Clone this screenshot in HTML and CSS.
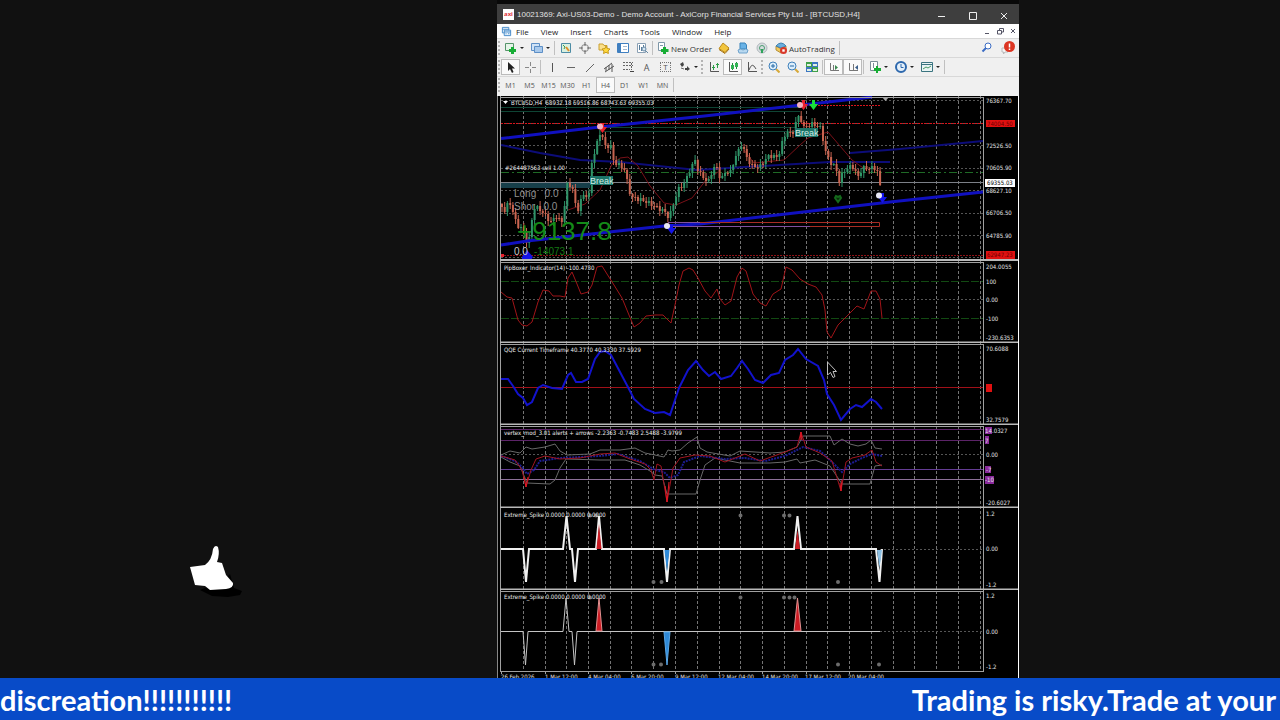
FILE: index.html
```
<!DOCTYPE html>
<html lang="en">
<head>
    <meta charset="UTF-8">
    <meta name="viewport" content="width=device-width, initial-scale=1.0">
    <title>BTCUSD,H4</title>
    <link rel="stylesheet" href="styles.css">
</head>
<body>
  <div class="stream">
    <main class="stage">
      <div class="like">
        <svg class="like-icon" viewBox="0 0 56 56" role="img" aria-label="Like">
          <path class="like-shadow" d="M12 48L36 38L42 32L46 46L54 49L52 53L40 55L24 54Z"/>
          <path class="like-hand" d="M2 25L17 23Q24 18 25 7Q27 2 30 5Q32 12 29 20L34 21L38 33L45 41Q46 46 38 47L22 48L17 44L7 43Z"/>
        </svg>
      </div>

      <section class="terminal">
        <header class="title-bar">
          <span class="app-logo">axi</span>
          <h1 class="title">10021369: Axi-US03-Demo - Demo Account - AxiCorp Financial Services Pty Ltd - [BTCUSD,H4]</h1>
          <div class="window-buttons">
            <button aria-label="Minimize"><svg viewBox="0 0 10 10"><path d="M1 5.5H8"/></svg></button>
            <button aria-label="Maximize"><svg viewBox="0 0 10 10"><path d="M1.5 1.5H8.5V8.5H1.5Z"/></svg></button>
            <button aria-label="Close"><svg viewBox="0 0 10 10"><path d="M2 2L8 8M8 2L2 8"/></svg></button>
          </div>
        </header>

        <nav class="menu-bar">
          <svg class="menu-icon" viewBox="0 0 12 12"><path fill="#fff" stroke="#3f86c6" d="M1.500 1.500H8.500V7.500H1.500ZM1.500 3.500H8.500"/><path fill="#e4f1fb" stroke="#3f86c6" d="M3.500 4.500H10.500V10.500H3.500ZM3.500 6.500H10.500M5.500 9V8M8.500 9V7.500"/></svg>
          <a href="#">File</a>
          <a href="#">View</a>
          <a href="#">Insert</a>
          <a href="#">Charts</a>
          <a href="#">Tools</a>
          <a href="#">Window</a>
          <a href="#">Help</a>
          <div class="child-buttons">
            <button aria-label="Minimize chart"><svg viewBox="0 0 8 8"><path d="M2 6.500H6"/></svg></button>
            <button aria-label="Restore chart"><svg viewBox="0 0 8 8"><path d="M1.500 3.500H5.500V7H1.500ZM3.500 3V1.500H7.500V5H6"/></svg></button>
            <button aria-label="Close chart"><svg viewBox="0 0 8 8"><path d="M2 2L6 6M6 2L2 6"/></svg></button>
          </div>
        </nav>

        <div class="toolbar">
          <i class="grip"></i>
          <button class="tool drop" aria-label="New chart"><svg viewBox="0 0 12 12"><path fill="#e5f4e8" stroke="#55946a" d="M.5 1.500H8.500V8.500H.5Z"/><path fill="#17ad35" d="M6 5H9V7H11V10H9V12H6V10H4V7H6Z"/></svg></button>
          <button class="tool drop" aria-label="Profiles"><svg viewBox="0 0 12 12"><path fill="#cfe2f6" stroke="#5d8fc6" d="M.5 1.500H8.500V8.500H.5Z"/><path fill="#a8c9ec" stroke="#5d8fc6" d="M3.500 4.500H11.500V10.500H3.500Z"/></svg></button>
          <i class="sep"></i>
          <button class="tool" aria-label="Market Watch"><svg viewBox="0 0 12 12"><path fill="#d9f0df" stroke="#4d8ca5" d="M1.500 1.500H10.500V10.500H1.500Z"/><path stroke="#3f9a4c" d="M3 3L5 5L4 7"/><path stroke="#e0902c" stroke-width="2" d="M6 5L9 9"/></svg></button>
          <button class="tool" aria-label="Data Window"><svg viewBox="0 0 12 12"><circle cx="6" cy="6" r="3.500" stroke="#888"/><path stroke="#666" d="M6 0V4M6 8V12M0 6H4M8 6H12"/></svg></button>
          <button class="tool" aria-label="Navigator"><svg viewBox="0 0 12 12"><path fill="#fbe08a" stroke="#caa032" d="M1 2H5L6 3.500H9V8H1Z"/><path fill="#ffd93b" stroke="#c79a1e" d="M8 4L9.200 6.500L12 7L10 9L10.400 11.500L8 10.300L5.500 11.500L6 9L4 7L7 6.500Z"/></svg></button>
          <button class="tool" aria-label="Terminal"><svg viewBox="0 0 12 12"><path fill="#fff" stroke="#3f7fc0" d="M.5 1.500H11.500V10.500H.5Z"/><path fill="#3f7fc0" d="M1 2H4V10H1Z"/><path stroke="#a0b8d0" d="M6 4.500H10M6 7.500H10"/></svg></button>
          <button class="tool" aria-label="Strategy Tester"><svg viewBox="0 0 12 12"><path fill="#fff" stroke="#8aa0b4" d="M1.500 1.500H9.500V10.500H1.500Z"/><path stroke="#577d9c" d="M3.500 3V8M5.500 5V9M7.500 3V6"/><circle cx="8" cy="7" r="2" fill="#d8e8f4" stroke="#6789a5"/><path stroke="#6789a5" d="M9.500 8.500L12 11"/></svg></button>
          <i class="sep"></i>
          <button class="tool wide"><svg viewBox="0 0 12 12"><path fill="#fff" stroke="#7e97a8" d="M1.500 .5H7.500V8.500H1.500ZM3 3.500H6"/><path fill="#17ad35" d="M6 5H9V7H11.500V10H9V12H6V10H4V7H6Z"/></svg>New Order</button>
          <button class="tool" aria-label="MetaEditor"><svg viewBox="0 0 12 12"><path fill="#f2c53d" stroke="#bd8a1c" d="M5 1L11 6L7 10.500L1 6.500Z"/><path stroke="#a87410" d="M1 7.500L7 11.500L11 7"/></svg></button>
          <button class="tool" aria-label="Community"><svg viewBox="0 0 12 12"><path fill="#69b2e6" stroke="#3883ba" d="M3 1H8L9.500 3V7H3Z"/><path fill="#b8d8ef" stroke="#6fa3cc" d="M1 8Q4 6 6 8Q9 6 11 8L10 11H2Z"/></svg></button>
          <button class="tool" aria-label="Signals"><svg viewBox="0 0 12 12"><circle cx="6" cy="6" r="5" fill="#d8dde0" stroke="#b0b8bc"/><circle cx="6" cy="6" r="2.500" stroke="#4a9c70"/><path stroke="#2fa35a" stroke-width="2" d="M6 7V11"/></svg></button>
          <button class="tool wide"><svg viewBox="0 0 12 12"><path fill="#f0c75c" stroke="#b5913a" d="M1 4L6 7L11 4V8L6 11L1 8Z"/><path fill="#69aede" stroke="#3d7fae" d="M1 4Q6 -2 11 4L6 6Z"/><circle cx="8.500" cy="8.500" r="3.500" fill="#d8382a"/><path fill="#fff" d="M7.300 7.300H9.700V9.700H7.300Z"/></svg>AutoTrading</button>
          <i class="sep"></i>
          <div class="toolbar-end">
            <button class="tool" aria-label="Search"><svg viewBox="0 0 12 12"><circle cx="7" cy="4" r="3" fill="#fff" stroke="#3b6cc4"/><path stroke="#3b6cc4" stroke-width="2" d="M5 6L1.500 9.500"/></svg></button>
            <button class="tool" aria-label="Alerts"><svg viewBox="0 0 14 14"><path fill="#f5f5f5" stroke="#bbb" d="M1 7H7V11H4L2.500 13V11H1Z"/><circle cx="8.500" cy="5.500" r="5.500" fill="#dc3522"/><path stroke="#fff" stroke-width="1.500" d="M8.500 2.500V6.500M8.500 7.500V9"/></svg></button>
          </div>
        </div>

        <div class="toolbar">
          <i class="grip"></i>
          <button class="tool pressed" aria-label="Cursor"><svg viewBox="0 0 12 12"><path fill="#222" d="M3 1V10L5 8L7 12L8.500 11L7 7.500H10Z"/></svg></button>
          <button class="tool" aria-label="Crosshair"><svg viewBox="0 0 12 12"><path stroke="#888" d="M6.500 1V5M6.500 8V12M1 6.500H5M8 6.500H12"/></svg></button>
          <i class="sep"></i>
          <button class="tool" aria-label="Vertical line"><svg viewBox="0 0 12 12"><path stroke="#555" d="M6.500 2V11"/></svg></button>
          <button class="tool" aria-label="Horizontal line"><svg viewBox="0 0 12 12"><path stroke="#666" d="M2 6.500H10"/></svg></button>
          <button class="tool" aria-label="Trendline"><svg viewBox="0 0 12 12"><path stroke="#666" d="M2 11L10 3"/></svg></button>
          <button class="tool" aria-label="Channel"><svg viewBox="0 0 12 12"><path stroke="#555" d="M1 8L9 2M2 11L11 5M3 6V10M6 4V9M9 3V11"/></svg></button>
          <button class="tool" aria-label="Fibonacci"><svg viewBox="0 0 12 12"><path stroke="#666" stroke-dasharray="2 1" d="M1 1.500H11M1 4.500H11M1 8.500H8M9.500 2V9"/><path stroke="#444" d="M8 10.500H12"/></svg></button>
          <button class="tool text-tool" aria-label="Text">A</button>
          <button class="tool text-tool" aria-label="Text label"><span class="dotted">T</span></button>
          <button class="tool drop" aria-label="Arrows"><svg viewBox="0 0 12 12"><path fill="#444" d="M1 3L4 1L5 4L3 6ZM6 7H8V5L11 8L8 10V9H6Z"/><path stroke="#666" d="M2 7L5 8"/></svg></button>
          <i class="grip"></i>
          <button class="tool" aria-label="Bar chart"><svg viewBox="0 0 12 12"><path stroke="#555" d="M2.500 1V10.500H11"/><path stroke="#2c9d46" d="M5.500 4V9M9.500 2V7M8 3.500H11M4 6.500H7"/></svg></button>
          <button class="tool pressed" aria-label="Candlesticks"><svg viewBox="0 0 12 12"><path stroke="#555" d="M2.500 1V10.500H11"/><path stroke="#1c8d38" d="M5.500 2V9M9.500 1V8"/><path fill="#2fb151" d="M4 4H7V8H4ZM8 2H11V6H8Z"/></svg></button>
          <button class="tool" aria-label="Line chart"><svg viewBox="0 0 12 12"><path stroke="#555" d="M2.500 1V10.500H11M3 9Q6 0 10 8"/></svg></button>
          <i class="grip"></i>
          <button class="tool" aria-label="Zoom in"><svg viewBox="0 0 12 12"><path stroke="#d6a93a" stroke-width="2" d="M8 8L11.500 11.500"/><circle cx="5" cy="5" r="4" fill="#dceefb" stroke="#3f80ba"/><path stroke="#2468a5" d="M5 3V7M3 5H7"/></svg></button>
          <button class="tool" aria-label="Zoom out"><svg viewBox="0 0 12 12"><path stroke="#d6a93a" stroke-width="2" d="M8 8L11.500 11.500"/><circle cx="5" cy="5" r="4" fill="#dceefb" stroke="#3f80ba"/><path stroke="#2468a5" d="M3 5H7"/></svg></button>
          <button class="tool" aria-label="Tile windows"><svg viewBox="0 0 12 12"><path fill="#3fa04a" d="M0 1H6V6H0ZM6 6H12V11H6Z"/><path fill="#3c76c2" d="M6 1H12V6H6ZM0 6H6V11H0Z"/><path fill="#e2f1e2" d="M1 3H5V5H1ZM7 3H11V5H7ZM1 8H5V10H1ZM7 8H11V10H7Z"/></svg></button>
          <i class="sep"></i>
          <button class="tool pressed" aria-label="Auto scroll"><svg viewBox="0 0 12 12"><path stroke="#777" d="M2.500 2V9.500H11M5.500 4V9"/><path fill="#3c8a50" d="M7 4L10 6.500L7 9Z"/></svg></button>
          <button class="tool pressed" aria-label="Chart shift"><svg viewBox="0 0 12 12"><path stroke="#777" d="M2.500 2V9.500H11M6.500 3V9"/><path fill="#3b5f8a" d="M11 4L8 6.500L11 9Z"/></svg></button>
          <i class="sep"></i>
          <button class="tool drop" aria-label="Indicators"><svg viewBox="0 0 12 12"><path fill="#fff" stroke="#7c8d98" d="M1.500 .5H8.500V9.500H1.500ZM4.500 2V7"/><path fill="#17ad35" d="M7 5H9V7H12V10H9V12H7V10H5V7H7Z"/></svg></button>
          <button class="tool drop" aria-label="Periods"><svg viewBox="0 0 12 12"><circle cx="6" cy="6" r="5" fill="#e5f0fa" stroke="#2d68ad" stroke-width="2"/><path stroke="#2d68ad" d="M6 3V6.500H8.500"/></svg></button>
          <button class="tool drop" aria-label="Templates"><svg viewBox="0 0 12 12"><path fill="#eaf4f4" stroke="#3b7480" d="M.5 1.500H11.500V10.500H.5ZM.5 3.500H11.500"/><path stroke="#4a9b67" d="M2 8L5 6L7 7L10 5"/></svg></button>
          <i class="sep"></i>
        </div>

        <div class="toolbar periods">
          <i class="grip"></i>
          <button class="tool">M1</button>
          <button class="tool">M5</button>
          <button class="tool">M15</button>
          <button class="tool">M30</button>
          <button class="tool">H1</button>
          <button class="tool pressed">H4</button>
          <button class="tool">D1</button>
          <button class="tool">W1</button>
          <button class="tool">MN</button>
          <i class="sep"></i>
        </div>

        <div class="charts">
          <!-- price -->
          <svg class="panel" viewBox="498 96 520 165">
            <defs>
              <path id="grid" d="M523.5 96V680M545.5 96V680M566.5 96V680M588.5 96V680M610.5 96V680M631.5 96V680M653.5 96V680M675.5 96V680M697.5 96V680M719.5 96V680M740.5 96V680M762.5 96V680M784.5 96V680M806.5 96V680M827.5 96V680M849.5 96V680M871.5 96V680M893.5 96V680M914.5 96V680M936.5 96V680M958.5 96V680M980.5 96V680"/>
              <path id="arrow" d="M-1 -4H2V0H5L0.500 6L-4 0H-1Z"/>
            </defs>
            <use href="#grid" class="grid"/>
            <path class="grid grid-h" d="M501 100.500H983M501 123.500H983M501 145.500H983M501 168.500H983M501 190.500H983M501 213.500H983M501 235.500H983M501 257.500H983"/>
            <path class="zone" d="M501 183H590V188H501Z"/>
            <path class="level-green" d="M501 107.500H800M501 111.500H800M604 127.500H796M604 131.500H796"/>
            <path class="order-line" d="M501 172.500H983"/>
            <path class="price-line" d="M501 182.500H983"/>
            <path class="stop-line" d="M501 123.500H983M806 105.500H880"/>
            <path class="stop-line dim" d="M501 255.500H983"/>
            <path class="ma-navy" d="M501 145L540 153L580 160L620 162L697 170L760 166L830 162L890 162M850 153L900 149L983 141"/>
            <path class="ma-red" d="M568 210L585 204L600 190L612 164L620 158L628 157L638 166L650 186L664 203L676 205L692 198L706 180L718 172M744 150L754 163L784 160L800 145L808 138L828 132L840 146L852 160L866 170"/>
            <g id="candles"></g>
            <path class="trend" d="M501 138.500L600 127L700 116.500L872 97M501 245L527 241L664 226L700 224L890 202L983 192"/>
            <path class="range" d="M668 222.500H879.500V226.500H668Z"/>
            <path class="range-left" d="M668 222.500H700M668 226.500H810"/>
            <rect class="break" x="590" y="176" width="23" height="9"/>
            <text class="break-text" x="590" y="184">Break</text>
            <rect class="break" x="795" y="128" width="23" height="9"/>
            <text class="break-text" x="795" y="136">Break</text>
            <use href="#arrow" x="602" y="127" fill="#e8202c"/><circle class="dot-pink" cx="600" cy="126.500" r="3"/>
            <use href="#arrow" x="803" y="104" fill="#e8202c"/><circle class="dot-pink" cx="800" cy="105" r="3"/>
            <use href="#arrow" x="813" y="104" fill="#18e03c"/>
            <path fill="#0a2a0c" stroke="#146a1c" stroke-width="2" d="M838 202L835 198L836 196L838 197L840 196L841 198Z"/>
            <use href="#arrow" x="671" y="228" fill="#1414e8"/><circle class="dot-white" cx="667" cy="226" r="3"/>
            <use href="#arrow" x="882" y="197" fill="#1414e8"/><circle class="dot-white" cx="879" cy="195.500" r="3"/>
            <path fill="#1414e8" d="M527 250L533 257L531 260H522V257Z"/>
            <path fill="#e8202c" d="M501 254H504V257H501Z"/>
            <path fill="#aaa" d="M882 97H889L885.500 101Z"/>
            <path fill="#fff" d="M503 101H508L505.500 104Z"/>
            <text class="label" x="511" y="105">BTCUSD,H4  68932.18 69516.86 68743.63 69355.03</text>
            <text class="label" x="505" y="170">#264487563 sell 1.00</text>
            <text class="stat" x="514" y="197">Long&#160;&#160; 0.0</text>
            <text class="stat" x="514" y="210">Shor&#160;&#160; 0.0</text>
            <text class="profit" x="517" y="240">+9137.8</text>
            <text class="stat light" x="514" y="255">0.0</text>
            <text class="stat green" x="534" y="255">-14073.1</text>
            <path class="frame" d="M500.500 96V261M500 97.500H984M983.500 97V261"/>
            <path class="divider" d="M500 260H1018"/>
            <g class="axis">
              <text x="986" y="103">76367.70</text>
              <text x="986" y="148">72526.50</text>
              <text x="986" y="170">70605.90</text>
              <text x="986" y="193">68627.10</text>
              <text x="986" y="215">66706.50</text>
              <text x="986" y="238">64785.90</text>
              <rect class="tag-red" x="986" y="120" width="29" height="7"/><text class="tag-dark" x="987" y="126">74004.50</text>
              <rect class="tag-white" x="985" y="179" width="30" height="8"/><text class="tag-black" x="987" y="185">69355.03</text>
              <rect class="tag-red" x="986" y="251" width="29" height="8"/><text class="tag-dark" x="987" y="257">62947.23</text>
            </g>
          </svg>

          <!-- oscillator -->
          <svg class="panel" viewBox="498 261 520 82">
            <use href="#grid" class="grid"/>
            <path class="grid grid-h" d="M501 299.500H983"/>
            <path class="level-dash" d="M501 281.500H983M501 318.500H983"/>
            <path class="osc-red" d="M501 292L507 297L512 298L518 320L522 325L527 326L532 322L538 302L543 290L549 291L553 296L560 296L565 297L568 278L572 272L577 284L581 294L588 292L592 285L597 267L602 266L607 274L614 285L622 298L629 315L634 327L640 323L646 316L655 315L663 315L671 323L675 305L679 285L683 271L689 268L693 270L698 278L705 291L711 298L717 289L720 299L725 305L731 301L737 277L742 268L746 271L753 294L760 303L766 306L773 294L781 289L786 267L792 270L800 279L808 284L816 287L822 295L825 310L827 332L831 338L838 325L848 315L857 306L864 309L871 291L876 291L880 299L882 318"/>
            <text class="label" x="504" y="270">PipBoxer_Indicator(14) -100.4730</text>
            <path class="frame" d="M500.500 261V343M500 262.500H984M983.500 262V343"/>
            <path class="divider" d="M500 342.500H1018"/>
            <g class="axis">
              <text x="986" y="269">204.0055</text>
              <text x="986" y="284">100</text>
              <text x="986" y="302">0.00</text>
              <text x="986" y="321">-100</text>
              <text x="986" y="340">-230.6353</text>
            </g>
          </svg>

          <!-- qqe -->
          <svg class="panel" viewBox="498 343 520 82">
            <use href="#grid" class="grid"/>
            <path class="mid-red" d="M501 387.500H983"/>
            <path class="qqe-blue" d="M501 379L508 379L513 386L518 394L523 398L527 405L532 402L538 388L543 385L552 388L562 389L568 375L571 373L576 382L582 382L588 379L595 359L600 352L605 351L611 355L620 372L630 391L634 399L645 409L655 413L664 412L670 415L675 400L679 388L688 370L696 361L703 370L709 376L715 372L721 379L731 376L737 368L742 361L748 369L755 380L763 383L771 375L779 373L785 360L793 355L798 349L806 359L818 366L824 380L827 394L834 405L841 420L850 409L856 405L862 407L871 399L876 402L882 409"/>
            <text class="label" x="504" y="352">QQE Current Timeframe 40.3770 40.3330 37.5929</text>
            <path class="pointer" d="M827.500 362V375L830.500 372.500L833 377.500L835 376.500L833 371.500H836.500Z"/>
            <path class="frame" d="M500.500 343V425M500 344.500H984M983.500 344V425"/>
            <path class="divider" d="M500 424.500H1018"/>
            <g class="axis">
              <text x="986" y="351">70.6088</text>
              <rect class="tag-red" x="986" y="384" width="6" height="8"/>
              <text x="986" y="422">32.7579</text>
            </g>
          </svg>

          <!-- vertex -->
          <svg class="panel" viewBox="498 425 520 83">
            <use href="#grid" class="grid"/>
            <path class="grid grid-h" d="M501 454.500H983"/>
            <path class="level-purple" d="M501 429.500H983M501 440.500H983"/>
            <path class="level-violet" d="M501 469.500H983"/>
            <path class="level-pale" d="M501 479.500H983"/>
            <path class="band" d="M501 455L510 451L520 453L526 447L532 449L545 447L555 444L560 451L567 455L590 454L600 450L620 450L635 448L645 453L655 455L664 457L668 450L672 451L680 450L688 443L697 437L700 448L707 452L730 456L740 451L770 453L785 452L797 447L803 436L830 436L834 445L842 439L850 444L858 446L866 444L871 440L875 448L882 449M501 457L510 462L520 466L527 483L550 484L555 480L560 468L566 459L600 460L625 460L640 465L650 471L655 475L662 476L667 494L696 494L700 480L705 465L715 458L740 463L770 463L785 462L797 459L800 463L815 460L830 466L838 478L842 484L870 484L875 466L882 465"/>
            <path class="vertex-blue" d="M501 456L515 461L522 467L527 474L534 470L540 461L560 458L600 456L618 454L640 461L655 470L664 472L670 478L678 475L684 462L700 456L725 459L745 458L765 461L785 456L803 447L820 451L832 462L842 472L850 464L862 458L872 454L882 456"/>
            <path class="vertex-red" d="M501 456L515 460L522 470L526 487L531 470L536 459L545 456L560 459L580 458L600 454L615 453L630 459L645 464L651 470L654 480L657 464L661 466L667 502L673 468L680 458L695 455L710 456L725 462L745 454L760 461L785 452L797 447L801 432L806 447L820 453L832 461L841 491L846 462L852 458L865 455L872 450L876 462L882 466"/>
            <path class="vertex-hot" d="M524 477L526 487L528 477M665 486L667 502L669 482M840 483L841 491L842 480M800 440L801 432L802 440"/>
            <text class="label" x="504" y="435">vertex_mod_3.01 alerts + arrows -2.2363 -0.7483 2.5488 -3.9799</text>
            <path class="frame" d="M500.500 425V508M500 426.500H984M983.500 426V508"/>
            <path class="divider" d="M500 507.500H1018"/>
            <g class="axis">
              <text x="992" y="433">.0327</text>
              <rect class="tag-purple" x="985" y="427" width="7" height="7"/><text x="985" y="433">14</text>
              <rect class="tag-purple" x="985" y="436" width="4" height="8"/><text x="985" y="443">7</text>
              <text x="986" y="457">0.00</text>
              <rect class="tag-purple" x="985" y="466" width="6" height="7"/><text x="986" y="472">-7</text>
              <rect class="tag-purple" x="985" y="476" width="9" height="8"/><text x="985" y="482">-10</text>
              <text x="986" y="505">-20.6027</text>
            </g>
          </svg>

          <!-- spikes -->
          <svg class="panel" viewBox="498 508 520 82">
            <use href="#grid" class="grid"/>
            <path class="grid grid-h" d="M880 549.500H983"/>
            <path class="spike-line thick" d="M501 549H523L526 582L529 549H563L566.500 516L570 549H572L575 582L578 549H596L599 516L602 549H664L667 582L670 549H794L797.500 516L801 549H876L879.500 582L882 549"/>
            <path class="spike-red" d="M596.500 549L599 524L601.500 549ZM795 549L797.500 530L800 549Z"/>
            <path class="spike-blue" d="M664.500 550L667 572L669.500 550Z"/>
            <path class="spike-sky" d="M877 550L879.500 568L882 550Z"/>
            <path class="dots" d="M653.500 582V582M661.500 582V582M740.500 515.500V515.500M784 515.500V515.500M789.500 515.500V515.500M838 582V582M590 515.500V515.500M596 515.500V515.500"/>
            <text class="label" x="504" y="517">Extreme_Spike 0.0000 0.0000 0.0000</text>
            <path class="frame" d="M500.500 508V590M983.500 508V590"/>
            <path class="divider" d="M500 589.500H1018"/>
            <g class="axis">
              <text x="986" y="516">1.2</text>
              <text x="986" y="551">0.00</text>
              <text x="986" y="587">-1.2</text>
            </g>
          </svg>

          <svg class="panel" viewBox="498 590 520 82">
            <use href="#grid" class="grid"/>
            <path class="grid grid-h" d="M880 631.500H983"/>
            <path class="spike-line" d="M501 631.500H523L525.500 665L528 631.500H563L566 598L569 631.500H572L574.500 665L577 631.500H880"/>
            <path class="spike-red edge" d="M596 631L599 598L602 631ZM794 631L797.500 598L801 631Z"/>
            <path class="spike-blue edge" d="M664 632L667 665L670 632Z"/>
            <path class="dots" d="M653.500 664.500V664.500M661 664.500V664.500M740.500 597.500V597.500M784 597.500V597.500M789.500 597.500V597.500M794.500 597.500V597.500M838 664.500V664.500M879 664.500V664.500M590 597.500V597.500"/>
            <text class="label" x="504" y="599">Extreme_Spike 0.0000 0.0000 0.0000</text>
            <path class="frame" d="M500.500 590V672M500 591.500H984M983.500 590V672"/>
            <path class="frame" d="M500 671.500H984"/>
            <g class="axis">
              <text x="986" y="598">1.2</text>
              <text x="986" y="634">0.00</text>
              <text x="986" y="669">-1.2</text>
            </g>
          </svg>

          <svg class="panel" viewBox="498 672 520 10">
            <path class="frame" d="M501.500 672V674M545.500 672V674M588.500 672V674M631.500 672V674M675.500 672V674M719.500 672V674M762.500 672V674M806.500 672V674M849.500 672V674"/>
            <g class="axis">
              <text x="501" y="679">26 Feb 2026</text>
              <text x="545" y="679">1 Mar 12:00</text>
              <text x="588" y="679">4 Mar 04:00</text>
              <text x="631" y="679">6 Mar 20:00</text>
              <text x="675" y="679">9 Mar 12:00</text>
              <text x="718" y="679">12 Mar 04:00</text>
              <text x="762" y="679">14 Mar 20:00</text>
              <text x="805" y="679">17 Mar 12:00</text>
              <text x="848" y="679">20 Mar 04:00</text>
            </g>
          </svg>
        </div>
      </section>
    </main>

    <footer class="ticker">
      <span>discreation!!!!!!!!!!!</span>
      <span>Trading is risky.Trade at your</span>
    </footer>
  </div>
  <script src="script.js"></script>
</body>
</html>
```
FILE: styles.css
```
* {
  box-sizing: border-box;
}

body {
  margin: 0;
  background: #111;
  font-family: "Open Sans", "Noto Sans", sans-serif;
}

.stream {
  display: flex;
  flex-direction: column;
  height: 100vh;
  overflow: hidden;
}

.stage {
  flex: 1;
  min-height: 0;
  display: grid;
  grid-template-columns: 1fr 522px 261px;
  overflow: hidden;
}

/* like sticker */
.like {
  display: flex;
  align-items: flex-end;
  padding: 0 0 84px 188px;
}

.like-icon {
  width: 56px;
  height: 56px;
}

.like-hand {
  fill: #fff;
}

.like-shadow {
  fill: #000;
}

/* terminal window */
.terminal {
  grid-column: 2;
  background: #f0f0f0;
  border-top: 4px solid #080808;
}

button {
  padding: 0;
  border: 0;
  background: none;
  font: inherit;
  color: inherit;
}

.title-bar {
  display: flex;
  align-items: center;
  height: 20px;
  padding-left: 6px;
  background: #3e3e3e;
  color: #e0e0e0;
}

.app-logo {
  width: 11px;
  height: 11px;
  margin-right: 3px;
  background: #fff;
  color: #e0303c;
  font-size: 6px;
  font-weight: 700;
  line-height: 10px;
  text-align: center;
}

.title {
  flex: 1;
  margin: 0;
  font-family: "Liberation Sans", sans-serif;
  font-size: 8px;
  font-weight: 400;
  white-space: nowrap;
}

.window-buttons {
  display: flex;
}

.window-buttons button {
  width: 31px;
  height: 20px;
}

.window-buttons svg {
  width: 10px;
  height: 10px;
  fill: none;
  stroke: #eee;
}

.menu-bar {
  display: flex;
  align-items: center;
  gap: 12px;
  height: 14px;
  padding-left: 4px;
  background: #fff;
  font-size: 8px;
}

.menu-bar a {
  color: #222;
  text-decoration: none;
}

.menu-icon {
  width: 11px;
  height: 11px;
  margin-right: -8px;
}

.child-buttons {
  display: flex;
  margin-left: auto;
}

.child-buttons button {
  display: flex;
  align-items: center;
  justify-content: center;
  width: 13px;
}

.child-buttons svg {
  width: 8px;
  height: 8px;
  fill: none;
  stroke: #556;
}

/* toolbars */
.toolbar {
  display: flex;
  align-items: center;
  height: 19px;
  padding-left: 1px;
  border-top: 1px solid #d8d8d8;
  color: #333;
  font-size: 8px;
}

.tool {
  display: flex;
  align-items: center;
  justify-content: center;
  width: 19px;
  height: 16px;
}

.tool svg {
  flex: none;
  width: 12px;
  height: 12px;
  fill: none;
}

.drop {
  width: 26px;
}

.drop::after {
  content: "";
  margin-left: 3px;
  border: 2px solid transparent;
  border-top-color: #222;
  border-bottom: 0;
}

.wide {
  width: auto;
  gap: 2px;
  padding: 0 3px;
  white-space: nowrap;
}

.pressed {
  border: 1px solid #bbb;
  background: #fafafa;
}

.text-tool {
  font-size: 9px;
  color: #555;
}

.dotted {
  border: 1px dotted #777;
  padding: 0 2px;
  font-size: 8px;
  line-height: 8px;
}

.grip {
  width: 3px;
  height: 14px;
  border-left: 2px dotted #b4b4b4;
}

.sep {
  width: 1px;
  height: 14px;
  margin: 0 1px;
  background: #c0c0c0;
}

.toolbar-end {
  display: flex;
  gap: 2px;
  margin-left: auto;
  padding-right: 2px;
}

.toolbar-end .tool:last-child svg {
  width: 14px;
  height: 14px;
}

.periods {
  height: 17px;
  color: #555;
  font-size: 7px;
}

/* charts */
.charts {
  margin-top: 3px;
  padding: 0 1px;
  background: #000;
  box-shadow: inset 1px 0 #888, inset -1px 0 #fff;
}

.panel {
  display: block;
  width: 100%;
  fill: none;
}

.panel text {
  font-family: "DejaVu Sans Condensed", "DejaVu Sans", sans-serif;
  white-space: pre;
}

.grid {
  stroke: #747474;
  stroke-dasharray: 3 2;
}

.grid-h {
  stroke: #555;
  stroke-dasharray: 2 2;
}

.frame {
  stroke: #a0a0a0;
}

.divider {
  stroke: #b8b8b8;
  stroke-width: 2;
}

.zone {
  fill: #173f4a;
}

.level-green {
  stroke: #0e4434;
}

.order-line {
  stroke: #1f6a26;
  stroke-dasharray: 8 3 2 3;
}

.price-line {
  stroke: #7c8088;
}

.stop-line {
  stroke: #d8141c;
  stroke-dasharray: 2 1;
}

.stop-line.dim {
  stroke: #8c1014;
}

.ma-navy {
  stroke: #0c0c78;
  stroke-width: 2;
}

.ma-red {
  stroke: #7a1018;
}

.trend {
  stroke: #1010c0;
  stroke-width: 3;
}

.range {
  stroke: #a82c24;
}

.range-left {
  stroke: #8050a0;
}

.break {
  fill: #1c7468;
}

.panel .break-text {
  fill: #d0ece6;
  font-family: "Liberation Sans", sans-serif;
  font-size: 9px;
}

.dot-pink {
  fill: #f0b0c0;
}

.dot-white {
  fill: #e8e8f4;
}

.up {
  stroke: #2f9468;
}

.down {
  stroke: #c86450;
}

.body {
  stroke-width: 2;
}

.label {
  fill: #ececec;
  font-size: 6px;
}

.panel .stat {
  fill: #909090;
  font-family: "Liberation Sans", sans-serif;
  font-size: 10px;
}

.panel .light {
  fill: #c8c8c8;
}

.panel .green {
  fill: #147814;
}

.panel .profit {
  fill: #148a18;
  font-family: "Liberation Sans", sans-serif;
  font-size: 26px;
}

.axis {
  fill: #e4e4e4;
  font-size: 6px;
}

.tag-red {
  fill: #e01010;
}

.tag-white {
  fill: #fff;
}

.tag-purple {
  fill: #8a2a9c;
}

.tag-dark {
  fill: #6a0000;
}

.tag-black {
  fill: #000;
}

.level-dash {
  stroke: #124a12;
  stroke-dasharray: 8 2;
}

.osc-red {
  stroke: #a01418;
}

.mid-red {
  stroke: #a01018;
}

.qqe-blue {
  stroke: #1212cc;
  stroke-width: 2;
}

.pointer {
  fill: #000;
  stroke: #c0c0c0;
}

.level-purple {
  stroke: #5c2468;
}

.level-violet {
  stroke: #643c94;
}

.level-pale {
  stroke: #8c7098;
}

.band {
  stroke: #686868;
}

.vertex-blue {
  stroke: #1c1c90;
  stroke-width: 2;
  stroke-dasharray: 2 1;
}

.vertex-red {
  stroke: #a01420;
}

.vertex-hot {
  stroke: #e01824;
}

.spike-line {
  stroke: #c4c4c4;
}

.thick {
  stroke: #f0f0f0;
  stroke-width: 2;
}

.spike-red {
  fill: #cc1c24;
}

.spike-blue {
  fill: #2f8ad8;
}

.spike-sky {
  fill: #8cc0e4;
}

.spike-red.edge {
  stroke: #e09090;
}

.spike-blue.edge {
  stroke: #5aa8e8;
}

.dots {
  stroke: #6c6c6c;
  stroke-width: 4;
  stroke-linecap: round;
}

/* ticker */
.ticker {
  display: flex;
  align-items: center;
  justify-content: space-between;
  height: 42px;
  padding-right: 4px;
  background: #084bc8;
  color: #fff;
  font-family: Lato, sans-serif;
  font-size: 29px;
  font-weight: 700;
  white-space: nowrap;
}
```
FILE: script.js
```
// Turning points of the price, [x, y]
const price = [
  [501, 204], [504, 212], [509, 201], [513, 212], [517, 226], [522, 228], [525, 235],
  [528, 248], [531, 225], [534, 208], [539, 208], [545, 215], [551, 222], [557, 215],
  [561, 225], [564, 210], [567, 185], [572, 185], [577, 213], [580, 202], [584, 195],
  [589, 195], [592, 160], [596, 150], [599, 133], [602, 135], [605, 146], [611, 147],
  [614, 163], [619, 165], [625, 170], [628, 185], [631, 197], [643, 200], [655, 206],
  [665, 212], [669, 218], [673, 205], [678, 190], [685, 182], [690, 170], [695, 160],
  [698, 170], [703, 177], [708, 183], [713, 168], [717, 168], [721, 180], [726, 171],
  [731, 172], [735, 157], [742, 144], [747, 158], [752, 166], [760, 167], [768, 156],
  [778, 157], [783, 140], [788, 130], [792, 136], [796, 122], [800, 115], [803, 128],
  [812, 124], [821, 128], [825, 150], [830, 162], [836, 168], [839, 183], [843, 172],
  [852, 165], [858, 177], [863, 168], [874, 168], [878, 172], [881, 192]
];

const step = 2.72;

function priceAt(x) {
  for (let i = 1; i < price.length; i++) {
    if (x <= price[i][0]) {
      const [x0, y0] = price[i - 1];
      const [x1, y1] = price[i];
      return y0 + (y1 - y0) * (x - x0) / (x1 - x0);
    }
  }
  return price[price.length - 1][1];
}

let wicks = { up: '', down: '' };
let bodies = { up: '', down: '' };
let open = priceAt(501);

for (let i = 0; i < 140; i++) {
  const x = Math.round((502 + i * step) * 10) / 10;
  const close = Math.round(priceAt(x) + Math.sin(i * 2.3) * 2);
  const side = close < open ? 'up' : 'down';
  const high = Math.round(Math.min(open, close) - 1 - Math.abs(Math.sin(i * 1.7)) * 4);
  const low = Math.round(Math.max(open, close) + 1 + Math.abs(Math.cos(i * 1.3)) * 4);
  wicks[side] += `M${x} ${high}V${low}`;
  bodies[side] += `M${x} ${Math.round(open)}V${close === Math.round(open) ? close + 1 : close}`;
  open = close;
}

document.getElementById('candles').innerHTML = `
  <path class="up" d="${wicks.up}"/>
  <path class="down" d="${wicks.down}"/>
  <path class="up body" d="${bodies.up}"/>
  <path class="down body" d="${bodies.down}"/>`;
```
